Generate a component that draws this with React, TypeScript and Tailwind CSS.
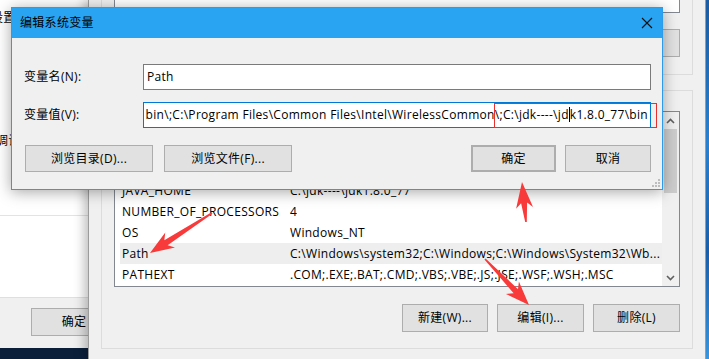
import React from "react";

type P = [number, number];

function arrowPoints(tail: P, tip: P, headLen: number, headHalf: number, neckHalf: number, tailHalf: number): string {
  const [x1, y1] = tail;
  const [x2, y2] = tip;
  const dx = x2 - x1;
  const dy = y2 - y1;
  const L = Math.hypot(dx, dy);
  const ux = dx / L;
  const uy = dy / L;
  const nx = -uy;
  const ny = ux;
  const bx = x2 - ux * headLen;
  const by = y2 - uy * headLen;
  const kx = bx + ux * 5;
  const ky = by + uy * 5;
  const pts: P[] = [
    [x1 + nx * tailHalf, y1 + ny * tailHalf],
    [kx + nx * neckHalf, ky + ny * neckHalf],
    [bx + nx * headHalf, by + ny * headHalf],
    [x2, y2],
    [bx - nx * headHalf, by - ny * headHalf],
    [kx - nx * neckHalf, ky - ny * neckHalf],
    [x1 - nx * tailHalf, y1 - ny * tailHalf],
  ];
  return pts.map((p) => `${p[0].toFixed(1)},${p[1].toFixed(1)}`).join(" ");
}

const rows: { name: string; value: string; selected?: boolean }[] = [
  { name: "ComSpec", value: "C:\\Windows\\system32\\cmd.exe" },
  { name: "DriverData", value: "C:\\Windows\\System32\\Drivers\\DriverData" },
  { name: "JAVA_HOME", value: "C:\\jdk----\\jdk1.8.0_77" },
  { name: "NUMBER_OF_PROCESSORS", value: "4" },
  { name: "OS", value: "Windows_NT" },
  { name: "Path", value: "C:\\Windows\\system32;C:\\Windows;C:\\Windows\\System32\\Wb...", selected: true },
  { name: "PATHEXT", value: ".COM;.EXE;.BAT;.CMD;.VBS;.VBE;.JS;.JSE;.WSF;.WSH;.MSC" },
];

function WinButton({ children, className = "" }: { children: React.ReactNode; className?: string }) {
  return (
    <div
      className={
        "flex items-center justify-center bg-[#e1e1e1] border border-[#adadad] text-[12px] text-black whitespace-nowrap " +
        className
      }
    >
      {children}
    </div>
  );
}

function Chevron({ up }: { up?: boolean }) {
  return (
    <svg width="9" height="6" viewBox="0 0 9 6">
      <polyline
        points={up ? "1,5 4.5,1.5 8,5" : "1,1 4.5,4.5 8,1"}
        fill="none"
        stroke="#606060"
        strokeWidth="1.6"
      />
    </svg>
  );
}

export default function App() {
  return (
    <div className="relative w-[709px] h-[359px] overflow-hidden bg-[linear-gradient(180deg,#1c5fa8,#2a86d8_40%,#1b62b0_70%,#3a9ae6)] font-['Segoe_UI','Open_Sans','Noto_Sans_CJK_SC',sans-serif] text-[12px] tracking-[0.3px] text-black">
      {/* left background window */}
      <div className="absolute left-0 top-0 w-[100px] h-[359px] flex flex-col bg-white">
        <div className="h-[216px] border-b border-[#e3e3e3] relative">
          <div className="absolute left-[-9px] top-[9px] whitespace-nowrap">设置</div>
          <div className="absolute left-[-4px] top-[132px] whitespace-nowrap">调试</div>
        </div>
        <div className="h-[82px] bg-white border-b border-[#dfdfdf]" />
        <div className="flex-1 bg-[#f0f0f0] pt-[10px] pl-[31px]">
          <WinButton className="w-[86px] h-[28px]">确定</WinButton>
        </div>
        <div className="h-[11px] bg-[#0b1f3b]" />
      </div>

      {/* environment variables window */}
      <div className="absolute left-[88px] top-0 w-[618px] h-[359px] bg-[#f0f0f0] border-l border-r border-[#9b9b9b] shadow-[-4px_0_10px_rgba(0,0,0,0.25)] flex flex-col px-[12px]">
        {/* user variables group */}
        <div className="h-[75px] border-x border-b border-[#dcdcdc] px-[12px] flex flex-col">
          <div className="h-[13px] bg-white border-x border-b border-[#828790]" />
          <div className="mt-[16px] flex justify-end pr-0">
            <WinButton className="w-[86px] h-[28px]">删除(D)</WinButton>
          </div>
        </div>
        {/* system variables group */}
        <div className="mt-[15px] h-[259px] border border-[#dcdcdc] px-[12px] pt-[20px] flex flex-col">
          <div className="h-[176px] bg-white border border-[#828790] flex">
            <div className="flex-1 flex flex-col justify-end overflow-hidden pb-[1px]">
              {rows.map((r) => (
                <div
                  key={r.name}
                  className={
                    "ml-[5px] h-[21px] shrink-0 flex items-center whitespace-nowrap " +
                    (r.selected ? "bg-[#eeeeee]" : "")
                  }
                >
                  <div className="w-[170px] pl-[2px] shrink-0">{r.name}</div>
                  <div className="overflow-hidden">{r.value}</div>
                </div>
              ))}
            </div>
            <div className="w-[17px] bg-[#f0f0f0] flex flex-col">
              <div className="h-[17px] flex items-center justify-center">
                <Chevron up />
              </div>
              <div className="mx-[2px] h-[64px] bg-[#cdcdcd]" />
              <div className="flex-1" />
              <div className="h-[17px] flex items-center justify-center">
                <Chevron />
              </div>
            </div>
          </div>
          <div className="mt-[17px] flex justify-end gap-[9px] pr-0">
            <WinButton className="w-[86px] h-[28px]">新建(W)...</WinButton>
            <WinButton className="w-[87px] h-[28px]">编辑(I)...</WinButton>
            <WinButton className="w-[87px] h-[28px]">删除(L)</WinButton>
          </div>
        </div>
      </div>

      {/* edit dialog */}
      <div className="absolute left-[11px] top-[7px] w-[652px] h-[183px] flex flex-col bg-[#f0f0f0] border border-[#2d9bea] shadow-[0_2px_14px_rgba(0,0,0,0.35)]">
        <div className="h-[30px] shrink-0 bg-[#29a4f2] flex items-center justify-between pl-[8px] pr-[9px]">
          <span className="text-[12px] text-black">编辑系统变量</span>
          <svg width="12" height="12" viewBox="0 0 12 12">
            <path d="M1 1 L11 11 M11 1 L1 11" stroke="#111" strokeWidth="1.1" />
          </svg>
        </div>
        <div className="relative flex-1 flex flex-col pl-[12px] pr-[11px] pt-[26px]">
          <div className="flex items-center h-[26px]">
            <div className="w-[119px] shrink-0">变量名(N):</div>
            <div className="flex-1 h-[26px] bg-white border border-[#7a7a7a] flex items-center pl-[3px]">Path</div>
          </div>
          <div className="flex items-center h-[26px] mt-[12px]">
            <div className="w-[119px] shrink-0">变量值(V):</div>
            <div className="flex-1 min-w-0 h-[26px] bg-white border border-[#0078d7] flex items-center justify-end pr-[2px] overflow-hidden whitespace-nowrap">
              <span className="shrink-0">
                bin\;C:\Program Files\Common Files\Intel\WirelessCommon\;C:\jdk----\jd
                <span className="inline-block w-px h-[15px] bg-black align-[-3px]" />
                k1.8.0_77\bin
              </span>
            </div>
          </div>
          <div className="flex items-center mt-[17px] h-[27px]">
            <WinButton className="w-[128px] h-[27px] ml-[1px]">浏览目录(D)...</WinButton>
            <WinButton className="w-[128px] h-[27px] ml-[11px]">浏览文件(F)...</WinButton>
            <div className="flex-1" />
            <WinButton className="w-[85px] h-[27px] border-2 border-[#0078d7]">确定</WinButton>
            <WinButton className="w-[86px] h-[27px] ml-[9px]">取消</WinButton>
          </div>
          <svg className="absolute right-[2px] bottom-[2px]" width="9" height="9" viewBox="0 0 9 9">
            <rect x="7" y="1" width="2" height="2" fill="#bdbdbd" />
            <rect x="4" y="4" width="2" height="2" fill="#bdbdbd" />
            <rect x="7" y="4" width="2" height="2" fill="#bdbdbd" />
            <rect x="1" y="7" width="2" height="2" fill="#bdbdbd" />
            <rect x="4" y="7" width="2" height="2" fill="#bdbdbd" />
            <rect x="7" y="7" width="2" height="2" fill="#bdbdbd" />
          </svg>
        </div>
      </div>

      {/* annotations */}
      <svg className="absolute left-0 top-0 pointer-events-none" width="709" height="359" viewBox="0 0 709 359">
        <rect x="494.5" y="103.5" width="162" height="24" fill="none" stroke="#e8302f" strokeWidth="1" />
        <polygon points={arrowPoints([212, 213], [150, 253], 24, 9, 3, 0.8)} fill="#f83a3a" />
        <polygon points={arrowPoints([526, 222], [522, 182], 26, 8.5, 3, 0.8)} fill="#f83a3a" />
        <polygon points={arrowPoints([485, 259], [529, 305], 24, 9, 3, 0.8)} fill="#f83a3a" />
      </svg>
    </div>
  );
}
